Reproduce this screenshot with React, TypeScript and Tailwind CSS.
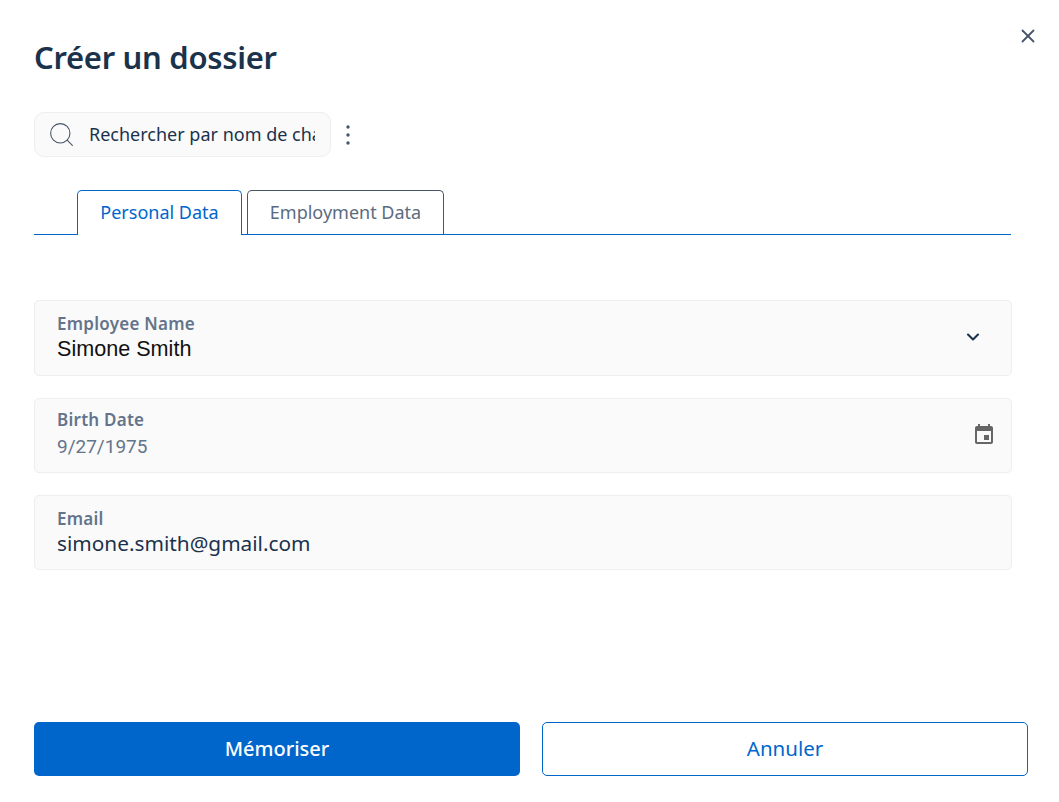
import React from "react";
import { ChevronDown, Search, X } from "lucide-react";

const font = "font-['Noto_Sans','Open_Sans',sans-serif]";

const Field = ({
  label,
  className,
  children,
  icon,
}: {
  label: string;
  className: string;
  children: React.ReactNode;
  icon?: React.ReactNode;
}) => (
  <div className={`flex items-center justify-between w-[978px] rounded-[5px] border border-[#eeeeee] bg-[#fafafa] pl-[22px] pr-[15px] ${className}`}>
    <div className="flex flex-col">
      <span className="text-[17px] leading-[20px] font-semibold text-[#64748b] tracking-[0.25px]">{label}</span>
      {children}
    </div>
    {icon}
  </div>
);

const App: React.FC = () => {
  return (
    <div className={`relative h-[802px] w-[1059px] overflow-hidden bg-white pl-[34px] ${font}`}>
      <button className="absolute right-[20px] top-[25px] text-[#475569]">
        <X size={22} strokeWidth={2} />
      </button>

      <h1 className="pt-[36px] pb-[1px] text-[31px] leading-[42px] font-semibold text-[#1b324c] tracking-[-0.3px]">Créer un dossier</h1>

      <div className="mt-[33px] flex items-center">
        <div className="flex h-[45px] w-[297px] items-center rounded-[10px] border border-[#eeeeee] bg-[#fafafa] pl-[12px] pr-[15px]">
          <Search size={29} strokeWidth={0.9} className="shrink-0 text-[#475569]" />
          <div className="ml-[13px] overflow-hidden whitespace-nowrap text-[18px] text-[#1b324c]">Rechercher par nom de champ</div>
        </div>
        <svg width="24" height="24" viewBox="0 0 24 24" className="ml-[5px] text-[#475569]" fill="currentColor">
          <circle cx="12" cy="4" r="1.7" />
          <circle cx="12" cy="12" r="1.7" />
          <circle cx="12" cy="20" r="1.7" />
        </svg>
      </div>

      <div className="mt-[33px] flex h-[45px] w-[977px] items-end gap-[5px] border-b border-[#0066cc] pl-[43px]">
        <div className="relative -mb-px flex h-[45px] w-[165px] items-center justify-center rounded-t-[5px] border border-b-0 border-[#0066cc] bg-white pb-[2px] text-[18px] text-[#0066cc]">
          Personal Data
        </div>
        <div className="flex h-[44px] w-[197px] items-center justify-center rounded-t-[5px] border border-b-0 border-[#475569] text-[18px] text-[#5b6b80]">
          Employment Data
        </div>
      </div>

      <div className="mt-[65px] flex flex-col gap-[22px]">
        <Field
          label="Employee Name"
          className="h-[76px]"
          icon={<ChevronDown size={20} strokeWidth={2.5} className="-mt-[2px] mr-[13px] text-[#1b324c]" />}
        >
          <span className="mt-[1px] font-['Liberation_Sans',sans-serif] text-[21.6px] leading-[28px] text-[#111111]">Simone Smith</span>
        </Field>
        <Field
          label="Birth Date"
          className="h-[75px]"
          icon={
            <svg width="24" height="24" viewBox="0 0 24 24" className="-mt-[1px] text-[#666666]" fill="currentColor">
              <path d="M17 12h-5v5h5v-5zM16 1v2H8V1H6v2H5c-1.11 0-1.99.9-1.99 2L3 19c0 1.1.89 2 2 2h14c1.1 0 2-.9 2-2V5c0-1.1-.9-2-2-2h-1V1h-2zm3 18H5V8h14v11z" />
            </svg>
          }
        >
          <span className="mt-[3px] font-['Roboto',sans-serif] text-[19px] leading-[28px] text-[#64748b]">9/27/1975</span>
        </Field>
        <Field label="Email" className="h-[75px] pt-[1px]">
          <span className="text-[20.8px] leading-[28px] text-[#1b324c]">simone.smith@gmail.com</span>
        </Field>
      </div>

      <div className="mt-[152px] flex w-[994px] gap-[22px]">
        <button className="h-[54px] w-[486px] rounded-[5px] bg-[#0066cc] text-[20px] font-medium text-white">Mémoriser</button>
        <button className="h-[54px] w-[486px] rounded-[5px] border border-[#0066cc] bg-white pb-[2px] text-[20.5px] text-[#0066cc]">Annuler</button>
      </div>
    </div>
  );
};

export default App;
